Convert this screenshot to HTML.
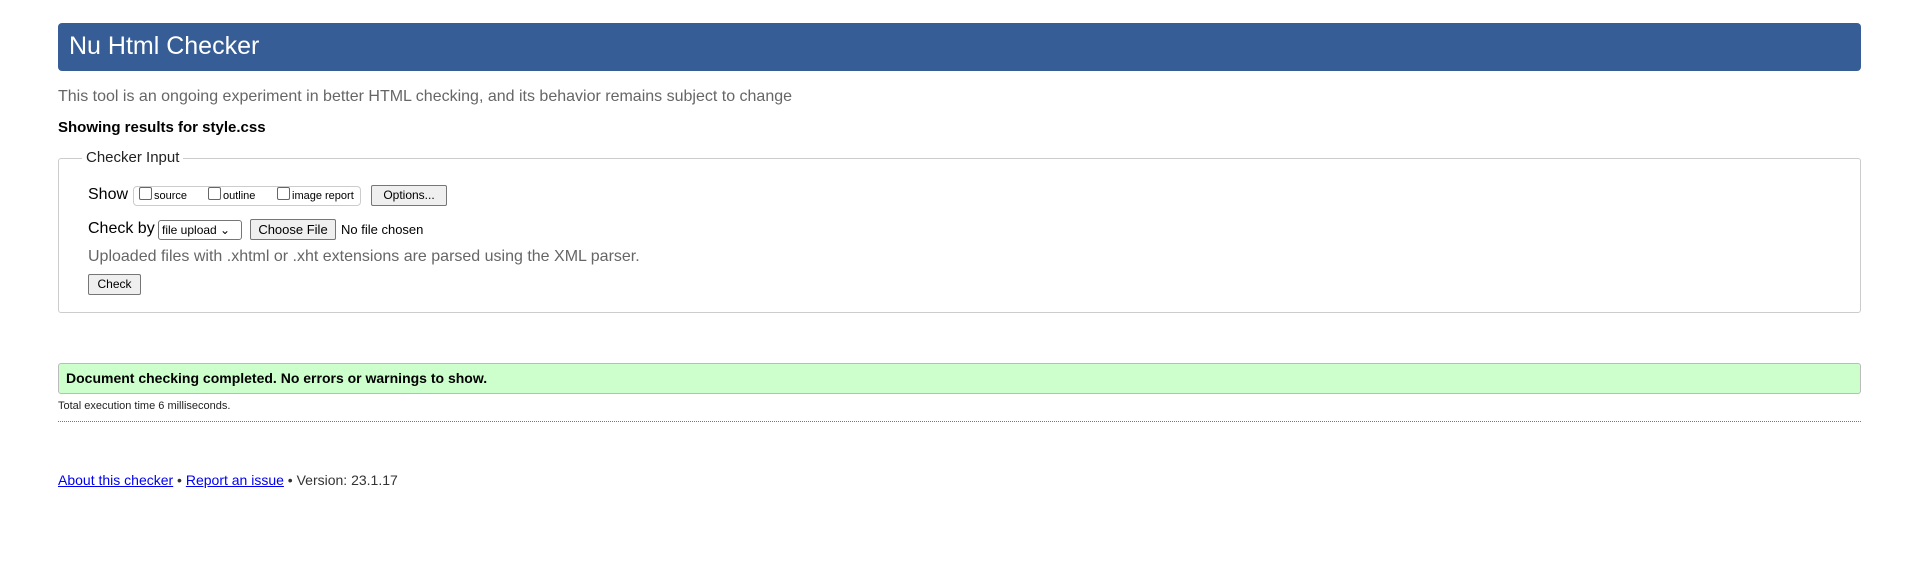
<!DOCTYPE html>
<html><head><style>
body{margin:0;background:#fff;font-family:"Liberation Sans",Arial,sans-serif;width:1920px;height:567px;overflow:hidden;position:relative;color:#000}
.a{position:absolute;white-space:nowrap}
.hdr{left:58px;top:23px;width:1803px;height:48px;background:#365d95;border-radius:4px}
.hdr span{position:absolute;left:11px;top:9px;color:#fff;font-size:25px}
.gray{color:#666}
.fs{left:58px;top:158px;width:1801px;height:153px;border:1px solid #ccc;border-radius:3px}
.btn{position:absolute;border:1px solid #767676;background:#efefef;border-radius:2px;font-size:12px;text-align:center;box-sizing:border-box}
.cb{display:inline-block;width:11px;height:11px;border:1px solid #666;border-radius:2px;vertical-align:-1px;margin-right:2px;background:#fff}
</style></head><body>
<div class="a hdr"><span>Nu Html Checker</span></div>
<div class="a gray" style="left:58px;top:88px;font-size:16px">This tool is an ongoing experiment in better HTML checking, and its behavior remains subject to change</div>
<div class="a" style="left:58px;top:119px;font-size:15px;font-weight:bold">Showing results for style.css</div>
<div class="a fs"></div>
<div class="a" style="left:82px;top:149px;padding:0 4px;background:#fff;font-size:15px;color:#222">Checker Input</div>
<div class="a" style="left:88px;top:186px;font-size:16px">Show</div>
<div class="a" style="left:133px;top:186px;width:226px;height:18px;border:1px solid #ccc;border-radius:4px;font-size:11px;line-height:18px">
<span style="position:absolute;left:5px"><span class="cb"></span>source</span>
<span style="position:absolute;left:74px"><span class="cb"></span>outline</span>
<span style="position:absolute;left:143px"><span class="cb"></span>image report</span></div>
<div class="btn" style="left:371px;top:185px;width:76px;height:21px;line-height:19px">Options...</div>
<div class="a" style="left:88px;top:220px;font-size:16px">Check by</div>
<div class="btn" style="left:158px;top:220px;width:84px;height:20px;line-height:18px;background:#fff;border-radius:3px;text-align:left;padding-left:3px">file upload &#8964;</div>
<div class="btn" style="left:250px;top:219px;width:86px;height:21px;line-height:19px;font-size:13px">Choose File</div>
<div class="a" style="left:341px;top:222px;font-size:13px">No file chosen</div>
<div class="a gray" style="left:88px;top:248px;font-size:16px">Uploaded files with .xhtml or .xht extensions are parsed using the XML parser.</div>
<div class="btn" style="left:88px;top:274px;width:53px;height:21px;line-height:19px">Check</div>
<div class="a" style="left:58px;top:363px;width:1801px;height:29px;background:#ccffcc;border:1px solid #bbb;border-radius:3px"></div>
<div class="a" style="left:66px;top:370px;font-size:14px;font-weight:bold">Document checking completed. No errors or warnings to show.</div>
<div class="a" style="left:58px;top:400px;font-size:11px;color:#222">Total execution time 6 milliseconds.</div>
<div class="a" style="left:58px;top:421px;width:1803px;height:0;border-top:1px dotted #777"></div>
<div class="a" style="left:58px;top:472px;font-size:14px;color:#333"><span style="color:#00e;text-decoration:underline">About this checker</span> • <span style="color:#00e;text-decoration:underline">Report an issue</span> • Version: 23.1.17</div>
</body></html>
